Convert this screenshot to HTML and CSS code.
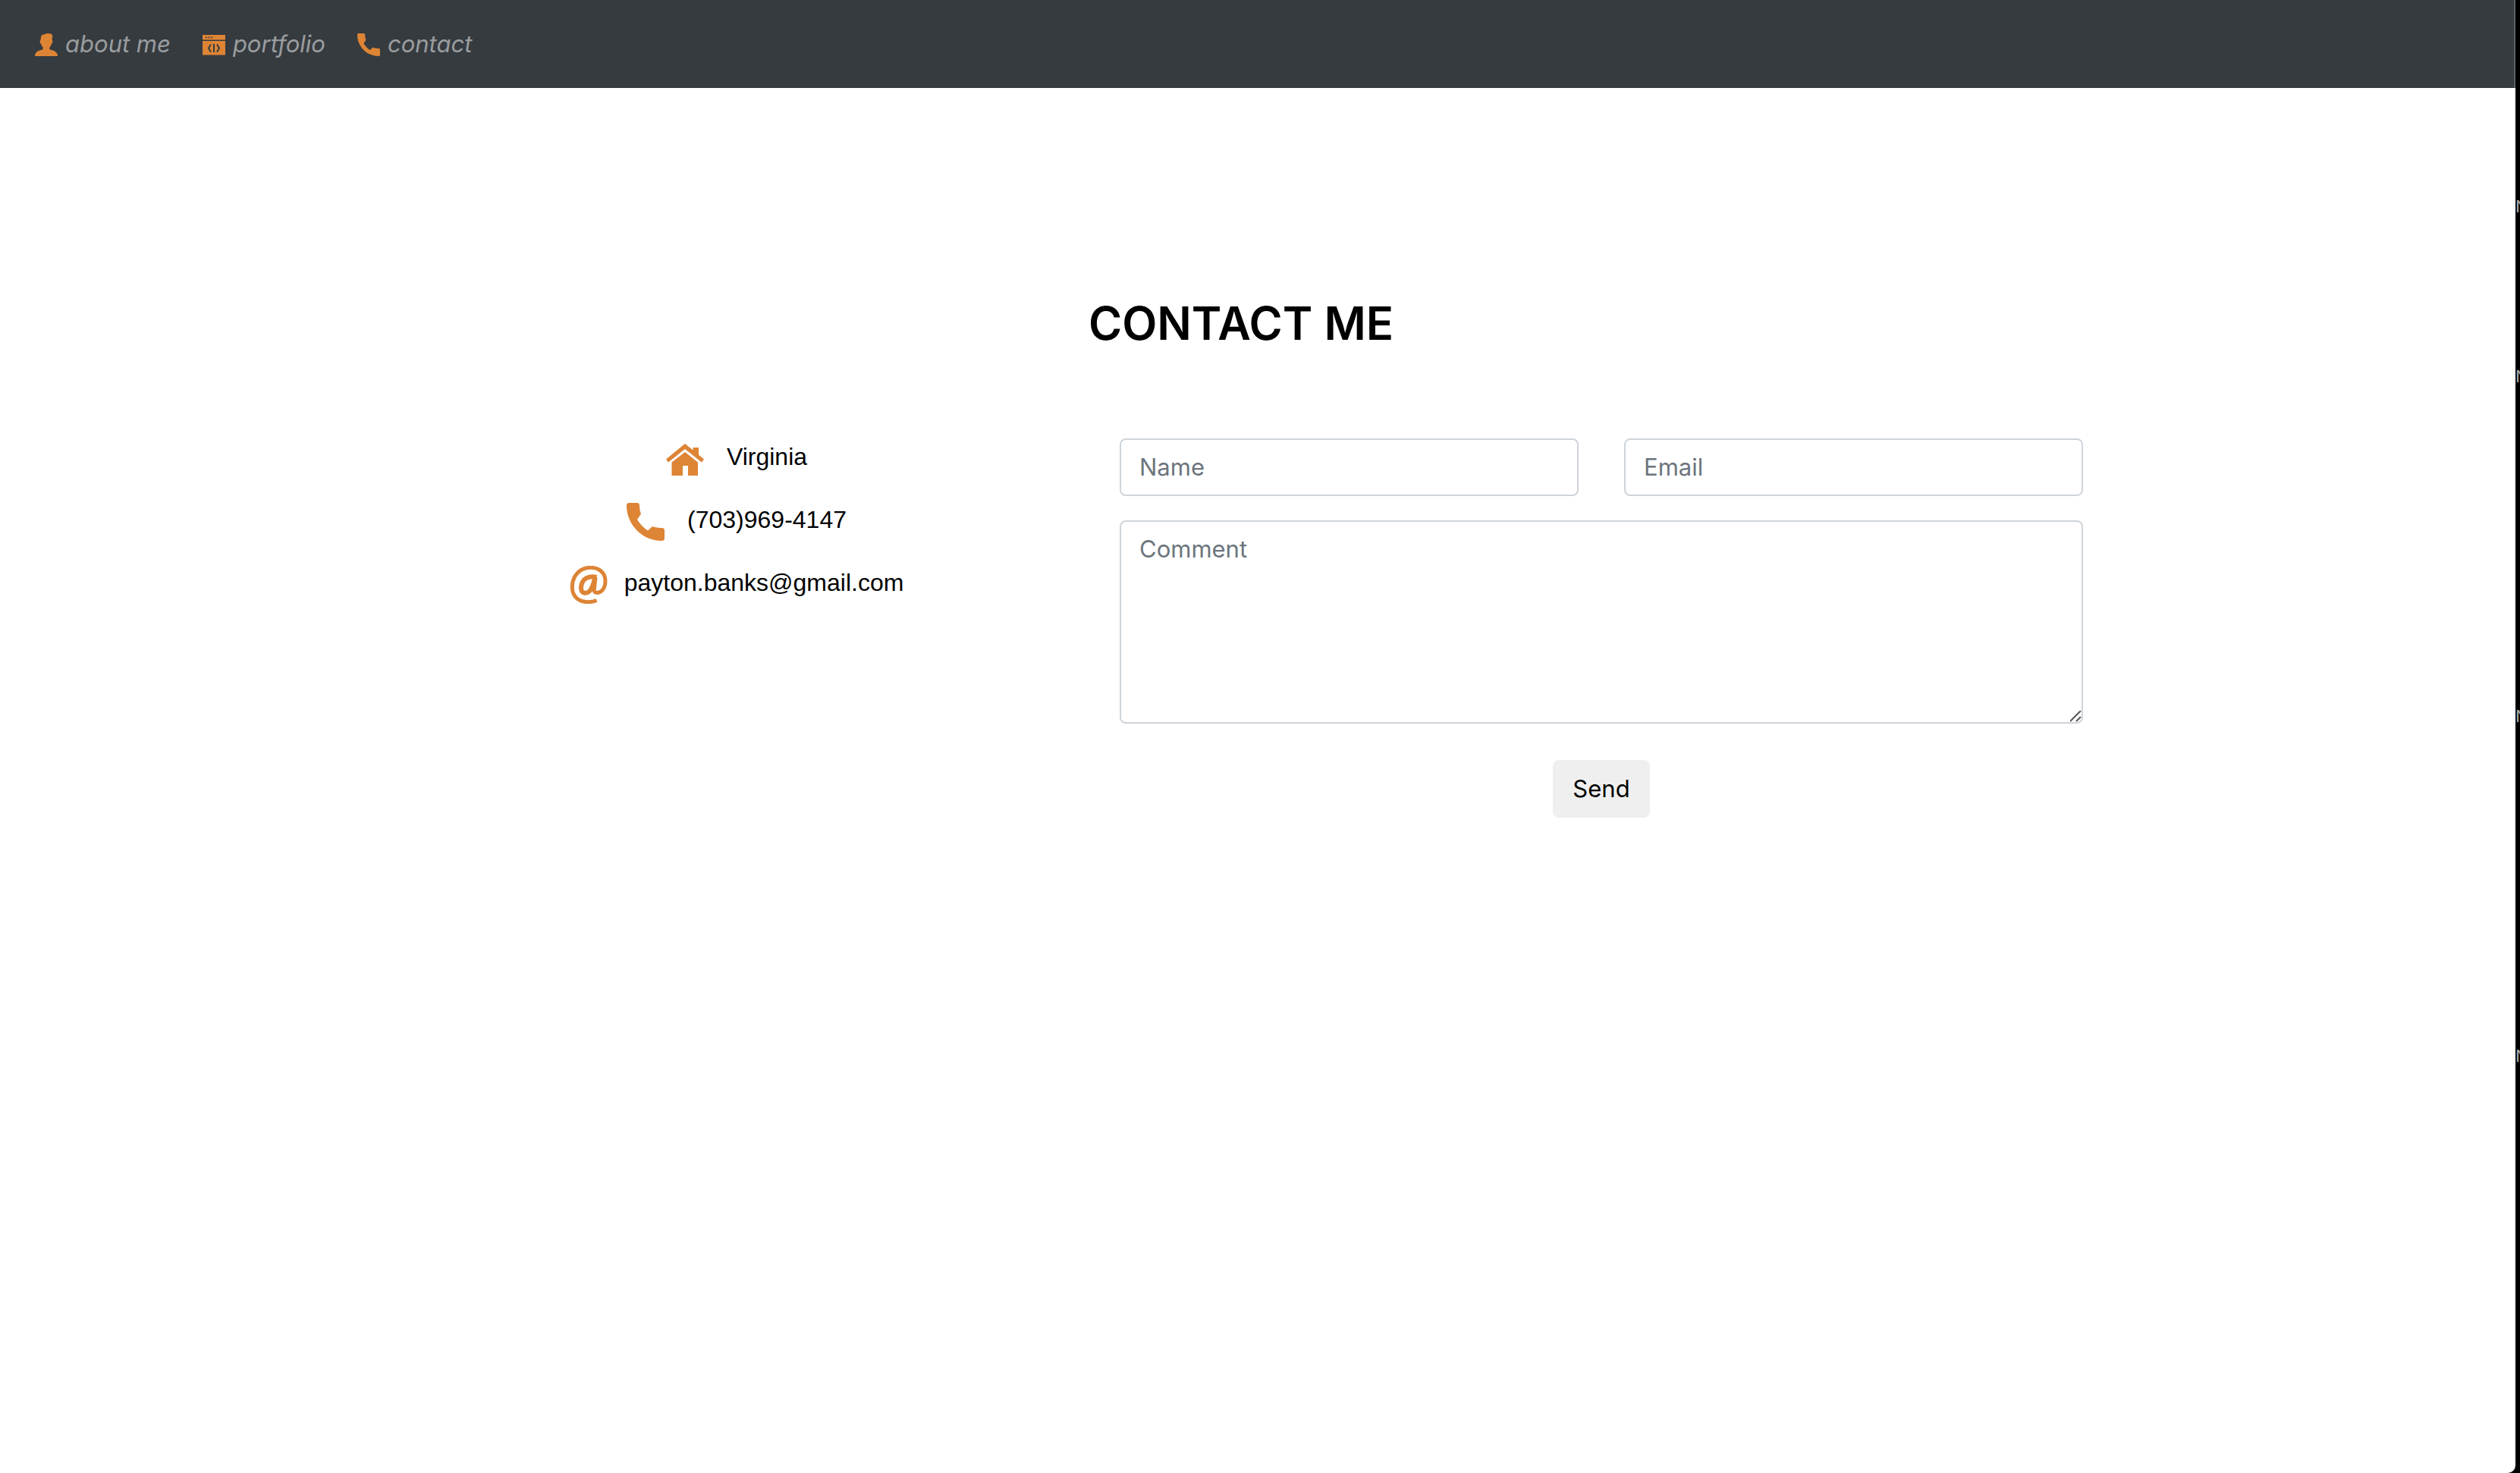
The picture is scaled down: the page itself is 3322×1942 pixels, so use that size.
FILE: index.html
```html
<!DOCTYPE html>
<html lang="en">
<head>
<meta charset="utf-8">
<title>Contact Me</title>
<link rel="stylesheet" href="styles.css">
</head>
<body>
<div class="window">
  <nav class="navbar">
    <a class="nav-link" href="#about">
      <svg class="nav-icon" viewBox="0 0 30 30" aria-hidden="true"><path d="M8 5C8 2 11 1.500 13 1.300C15 0 18-.3 21 .6C23 1.500 23.800 4 22.800 6L22.600 9C24 9.500 23.300 13.500 21.800 14C21.300 16 20.500 17.500 19.300 18.600V21C22 22.500 30 22.500 30 30H0C0 22.500 8 22.500 10.700 21V18.600C9.500 17.500 8.700 16 8.200 14C6.700 13.500 6 9.500 7.400 9Z"/></svg>
      <span>about me</span>
    </a>
    <a class="nav-link" href="#portfolio">
      <svg class="nav-icon" viewBox="0 0 30 30" aria-hidden="true"><path fill-rule="evenodd" d="M0 2H30V8.500H0ZM0 10H30V28.500H0ZM4 4.500V6.300H5.800V4.500ZM7.500 4.500V6.300H9.300V4.500ZM11 4.500V6.300H12.800V4.500Z"/><path class="cut" d="M11 14.500L8 19.500L11 24.500M15 14V25M19 14.500L22 19.500L19 24.500"/></svg>
      <span>portfolio</span>
    </a>
    <a class="nav-link" href="#contact">
      <svg class="nav-icon" viewBox="0 0 50 50" aria-hidden="true"><path d="M3 0H14C16 0 17 1.500 17 3.500C17 7.500 17.800 11 19 14.500L14 22C18 28 22 33 28 36.500L34 31C38 32.500 42 33 46.500 33C48.500 33 50 34 50 36V47C50 49 48.500 50 46.500 50C20 50 0 28 0 3.500C0 1.500 1 0 3 0Z"/></svg>
      <span>contact</span>
    </a>
  </nav>

  <main class="contact">
    <h1 class="title">CONTACT ME</h1>
    <div class="columns">
      <address class="details">
        <p class="detail">
          <svg class="detail-icon" viewBox="0 0 50 50" aria-hidden="true"><path d="M0 25.500L25 5L35.500 13.500V10H43V19.500L50 25.500L47 29.500L25 12L3 29.500ZM7.500 29.500L25 16L42 29.500V47H29V34H22V47H7.500Z"/></svg>
          <span>Virginia</span>
        </p>
        <p class="detail">
          <svg class="detail-icon" viewBox="0 0 50 50" aria-hidden="true"><path d="M3 0H14C16 0 17 1.500 17 3.500C17 7.500 17.800 11 19 14.500L14 22C18 28 22 33 28 36.500L34 31C38 32.500 42 33 46.500 33C48.500 33 50 34 50 36V47C50 49 48.500 50 46.500 50C20 50 0 28 0 3.500C0 1.500 1 0 3 0Z"/></svg>
          <span>(703)969-4147</span>
        </p>
        <p class="detail detail-email">
          <svg class="detail-icon" viewBox="0 0 50 50" aria-hidden="true"><path class="ring" d="M35.500 45.500C31.500 47.200 27.500 47.700 24 47.700C11 47.700 3.300 39.500 3.300 28C3.300 13.500 13 2.300 27.500 2.300C39 2.300 47 9.500 47 20C47 30 41.500 35.500 36 35.500C32.500 35.500 32 33 32.500 30"/><path class="bowl" d="M35.500 15C25 12.500 16 17 15 28C14.500 37 22 37.500 26.500 33C29.500 29.500 31.500 24 33.500 15L32 30"/></svg>
          <span>payton.banks@gmail.com</span>
        </p>
      </address>

      <form class="form">
        <input class="field" type="text" name="name" placeholder="Name" aria-label="Name">
        <input class="field" type="email" name="email" placeholder="Email" aria-label="Email">
        <textarea class="field comment" name="comment" rows="5" placeholder="Comment" aria-label="Comment"></textarea>
        <button class="send" type="submit">Send</button>
      </form>
    </div>
  </main>
</div>
<ul class="desktop">
  <li>N</li>
  <li class="tall">N</li>
  <li class="tall">N</li>
  <li>N</li>
</ul>
</body>
</html>
```
FILE: styles.css
```css
* { box-sizing: border-box; }

body {
  margin: 0;
  display: flex;
  min-height: 100vh;
  background: #000;
  color: #000;
  font-family: Inter, "Liberation Sans", sans-serif;
  font-size: 31px;
  line-height: 48px;
}

.window {
  flex: 1;
  min-width: 0;
  background: #fff;
  border-bottom-right-radius: 10px;
}

.navbar {
  display: flex;
  align-items: center;
  gap: 42px;
  height: 116px;
  padding: 0 46px;
  background: #363b3f;
  border-right: 2px solid #5b6063;
}

.nav-link {
  display: flex;
  align-items: center;
  gap: 10px;
  color: #9a9d9f;
  font-style: italic;
  text-decoration: none;
}

.nav-icon {
  width: 30px;
  height: 30px;
  margin-top: 2px;
  fill: #dd8435;
}

.cut {
  fill: none;
  stroke: #363b3f;
  stroke-width: 2;
}

.contact {
  padding: 272px 44px 0 0;
}

.title {
  margin: 0;
  font-size: 60px;
  font-weight: 600;
  line-height: 76px;
  text-align: center;
}

.columns {
  display: grid;
  grid-template-columns: 5fr 7fr;
  max-width: 2280px;
  margin: 0 auto;
  padding-top: 114px;
}

.details {
  font-family: "Liberation Sans", Arial, sans-serif;
  font-size: 32px;
  font-style: normal;
}

.detail {
  display: flex;
  justify-content: center;
  gap: 30px;
  margin: 0 0 33px;
}

.detail-email { gap: 22px; }

.detail-icon {
  width: 50px;
  height: 50px;
  margin: 2px 0 -2px;
  fill: #dd8435;
}

.ring, .bowl {
  fill: none;
  stroke: #dd8435;
  stroke-width: 5;
}

.bowl { stroke-width: 6; }

.form {
  display: grid;
  grid-template-columns: 1fr 1fr;
  gap: 32px 60px;
  padding: 0 30px;
}

.field {
  width: 100%;
  margin: 0;
  padding: 12px 24px;
  border: 2px solid #ced4da;
  border-radius: 8px;
  background: #fff;
  color: #495057;
  font: inherit;
}

.field::placeholder {
  color: #6c757d;
  opacity: 1;
}

.comment {
  grid-column: 1 / -1;
  display: block;
  resize: vertical;
}

.comment::-webkit-resizer {
  background: url("data:image/svg+xml,%3Csvg xmlns='http://www.w3.org/2000/svg' width='15' height='15'%3E%3Cpath d='M0 14L14 0M8 14L14 8' stroke='%23555' stroke-width='2'/%3E%3C/svg%3E") no-repeat;
}

.send {
  grid-column: 1 / -1;
  justify-self: center;
  margin-top: 16px;
  padding: 14px 26px;
  border: 0;
  border-radius: 8px;
  background: #efefef;
  color: #000;
  font: inherit;
}

.desktop {
  width: 6px;
  margin: 0;
  padding: 248px 0 0;
  overflow: hidden;
  list-style: none;
  color: #aaa;
  font-size: 22px;
}

.desktop li { height: 224px; }

.desktop .tall { height: 448px; }
```
